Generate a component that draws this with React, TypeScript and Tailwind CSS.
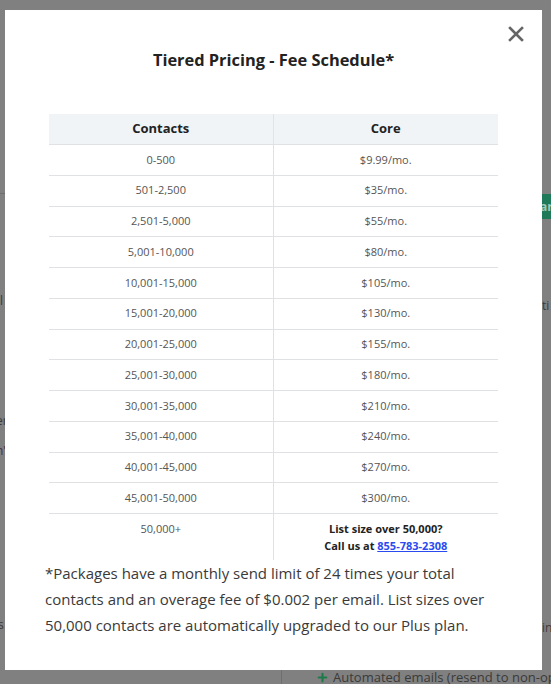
import { Plus } from 'lucide-react';

const tiers = [
  { contacts: '0-500', core: '$9.99/mo.' },
  { contacts: '501-2,500', core: '$35/mo.' },
  { contacts: '2,501-5,000', core: '$55/mo.' },
  { contacts: '5,001-10,000', core: '$80/mo.' },
  { contacts: '10,001-15,000', core: '$105/mo.' },
  { contacts: '15,001-20,000', core: '$130/mo.' },
  { contacts: '20,001-25,000', core: '$155/mo.' },
  { contacts: '25,001-30,000', core: '$180/mo.' },
  { contacts: '30,001-35,000', core: '$210/mo.' },
  { contacts: '35,001-40,000', core: '$240/mo.' },
  { contacts: '40,001-45,000', core: '$270/mo.' },
  { contacts: '45,001-50,000', core: '$300/mo.' },
];

export default function App() {
  return (
    <div
      className="w-[551px] h-[684px] overflow-hidden bg-[#808080] flex flex-col"
      style={{ fontFamily: '"Open Sans", "Liberation Sans", sans-serif' }}
    >
      {/* page behind the dim overlay */}
      <div className="h-[10px] shrink-0" />

      <div className="flex h-[660px] shrink-0">
        {/* left edge of the page underneath */}
        <div className="w-[5px] shrink-0 overflow-hidden text-[12px] text-[#3a3a3a] leading-none">
          <div className="h-[183px]" />
          <div className="h-px bg-[#6f6f6f] w-full" />
          <div className="h-[101px]" />
          <div className="-ml-[3px]">il</div>
          <div className="h-[108px]" />
          <div className="-ml-[4px]">er</div>
          <div className="h-[18px]" />
          <div className="-ml-[4px] text-[#4a2f4a]">n'</div>
          <div className="h-[162px]" />
          <div className="-ml-[2px]">s</div>
        </div>

        {/* modal */}
        <div className="w-[537px] shrink-0 bg-white flex flex-col">
          <div className="flex justify-end pt-[16px] pr-[18px] h-[32px]">
            <svg width="16" height="16" viewBox="0 0 16 16" className="text-[#666]">
              <path d="M2 2 L14 14 M14 2 L2 14" stroke="currentColor" strokeWidth="2.6" strokeLinecap="square" fill="none" />
            </svg>
          </div>

          <h2 className="mt-[6px] text-center text-[16.4px] leading-[24px] font-bold text-[#222]">
            Tiered Pricing - Fee Schedule*
          </h2>

          <div className="mt-[42px] mx-auto w-[449px]">
            <div className="grid grid-cols-2 h-[30px] bg-[#f1f4f7] text-[13px] font-bold text-[#222]">
              <div className="flex items-center justify-center border-r border-[#e1e4e7]">Contacts</div>
              <div className="flex items-center justify-center">Core</div>
            </div>
            {tiers.map((t) => (
              <div key={t.contacts} className="grid grid-cols-2 h-[30.75px] border-t border-[#dfe1e4] text-[11px] text-[#555]">
                <div className="flex items-center justify-center border-r border-[#dfe1e4]">{t.contacts}</div>
                <div className="flex items-center justify-center">{t.core}</div>
              </div>
            ))}
            <div className="grid grid-cols-2 h-[47px] border-t border-[#dfe1e4] text-[11px]">
              <div className="text-center pt-[6px] leading-[17px] text-[#555] border-r border-[#dfe1e4]">50,000+</div>
              <div className="text-center pt-[6px] leading-[17px] font-bold text-[#222]">
                List size over 50,000?
                <br />
                Call us at{' '}
                <a href="#" className="text-[#2a4bf0] underline">855-783-2308</a>
              </div>
            </div>
          </div>

          <p className="px-[40px] text-[15px] leading-[26px] text-[#3a3a3a]">
            *Packages have a monthly send limit of 24 times your total
            <br />
            contacts and an overage fee of $0.002 per email. List sizes over
            <br />
            50,000 contacts are automatically upgraded to our Plus plan.
          </p>
        </div>

        {/* right edge of the page underneath */}
        <div className="w-[9px] shrink-0 overflow-hidden text-[12px] leading-none">
          <div className="h-[184px]" />
          <div className="h-[25px] bg-[#1f7a5a] text-[#9fc9b6] font-bold flex items-center -ml-[2px]">ar</div>
          <div className="h-[81px]" />
          <div className="text-[#3a3a3a]">ti</div>
          <div className="h-[310px]" />
          <div className="text-[#4a3a3a]">in</div>
        </div>
      </div>

      {/* bottom strip of the page underneath */}
      <div className="h-[14px] shrink-0 flex items-start overflow-hidden">
        <div className="w-[282px] shrink-0 h-full border-r border-[#6f6f6f]" />
        <div className="flex items-center gap-[4px] pl-[34px] pt-px text-[13px] leading-none text-[#3a3a3a] whitespace-nowrap">
          <Plus size={13} strokeWidth={4} className="text-[#1f7a4a] shrink-0" />
          <span>Automated emails (resend to non-opened)</span>
        </div>
      </div>
    </div>
  );
}
